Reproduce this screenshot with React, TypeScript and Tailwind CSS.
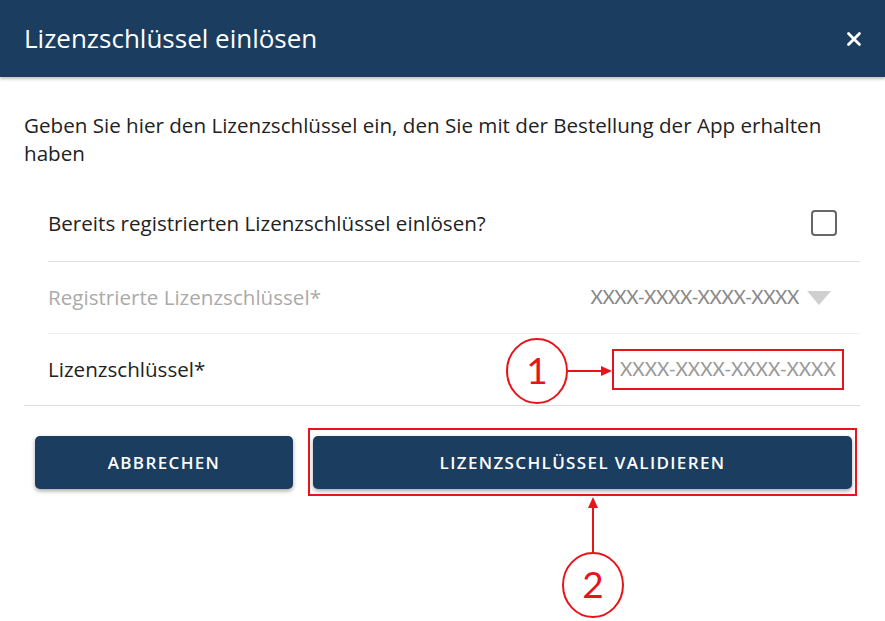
import { X } from "lucide-react";

const font = { fontFamily: "'Open Sans', Lato, sans-serif" };

function Annotations() {
    return (
        <svg className="absolute left-0 top-0 pointer-events-none" width={885} height={621} viewBox="0 0 885 621">
            {/* marker 1 */}
            <ellipse cx={537} cy={371} rx={30} ry={32} fill="none" stroke="#e8141b" strokeWidth={2} />
            <text x={537} y={384} textAnchor="middle" fontSize={37} fill="#e8141b" fontFamily="Lato, sans-serif">1</text>
            <line x1={567} y1={371} x2={602} y2={371} stroke="#e8141b" strokeWidth={2} />
            <polygon points="612,371 601,366 601,376" fill="#e8141b" />
            {/* marker 2 */}
            <ellipse cx={593} cy={585} rx={30} ry={32} fill="none" stroke="#e8141b" strokeWidth={2} />
            <text x={593} y={598} textAnchor="middle" fontSize={37} fill="#e8141b" fontFamily="Lato, sans-serif">2</text>
            <line x1={593} y1={553} x2={593} y2={506} stroke="#e8141b" strokeWidth={2} />
            <polygon points="593,497 588,508 598,508" fill="#e8141b" />
        </svg>
    );
}

export default function App() {
    return (
        <div className="relative w-[885px] h-[621px] bg-white overflow-hidden text-[#222]" style={font}>
            {/* Header */}
            <div className="h-[77px] bg-[#1b3d5f] flex items-center justify-between pl-6 pr-[20px] shadow-[0_2px_3px_rgba(0,0,0,0.25)] relative z-10">
                <span className="text-white text-[26px] leading-none pb-[2px]">Lizenzschlüssel einlösen</span>
                <X className="text-white" size={22} strokeWidth={3} />
            </div>

            {/* Body */}
            <div className="px-6 pt-[34px]">
                <p className="text-[20.6px] leading-[28px]">
                    Geben Sie hier den Lizenzschlüssel ein, den Sie mit der Bestellung der App erhalten haben
                </p>

                <div className="mt-[22px] pr-[1px]">
                    <div className="ml-6 h-[73px] flex items-center justify-between border-b border-[#e2e2e2] pb-[4px]">
                        <span className="text-[20.6px]">Bereits registrierten Lizenzschlüssel einlösen?</span>
                        <div className="w-[26px] h-[26px] mr-[23px] border-2 border-[#666] rounded-[4px]" />
                    </div>
                    <div className="ml-6 h-[72px] flex items-center justify-between border-b border-[#efefef]">
                        <span className="text-[20.6px] text-[#aaa]">Registrierte Lizenzschlüssel*</span>
                        <div className="flex items-center gap-[8px] mr-[29px]">
                            <span className="text-[19px] text-[#888] tracking-[-0.02em]" style={{ fontFamily: "Lato, sans-serif" }}>XXXX-XXXX-XXXX-XXXX</span>
                            <svg width={24} height={14} viewBox="0 0 24 14">
                                <polygon points="0,0 24,0 12,14" fill="#cfcfcf" />
                            </svg>
                        </div>
                    </div>
                    <div className="h-[72px] flex items-center justify-between border-b border-[#dcdcdc]">
                        <span className="ml-6 text-[20.6px]">Lizenzschlüssel*</span>
                        <div className="w-[232px] h-[41px] mr-[16px] border-2 border-[#e8141b] flex items-center pl-[6px]">
                            <span className="text-[19px] text-[#999]" style={{ fontFamily: "Lato, sans-serif" }}>XXXX-XXXX-XXXX-XXXX</span>
                        </div>
                    </div>
                </div>
            </div>

            {/* Buttons */}
            <div className="flex gap-[20px] pl-[35px] mt-[30px]">
                <button className="w-[258px] h-[53px] bg-[#1b3d5f] rounded-[5px] text-white text-[17px] font-semibold tracking-[0.08em] shadow-[0_2px_4px_rgba(0,0,0,0.35)]">
                    ABBRECHEN
                </button>
                <div className="relative">
                    <button className="w-[539px] h-[53px] bg-[#1b3d5f] rounded-[5px] text-white text-[17px] font-semibold tracking-[0.08em] shadow-[0_2px_4px_rgba(0,0,0,0.35)]">
                        LIZENZSCHLÜSSEL VALIDIEREN
                    </button>
                    <div className="absolute -left-[5px] -top-[8px] w-[549px] h-[68px] border-2 border-[#e8141b]" />
                </div>
            </div>

            <Annotations />
        </div>
    );
}
